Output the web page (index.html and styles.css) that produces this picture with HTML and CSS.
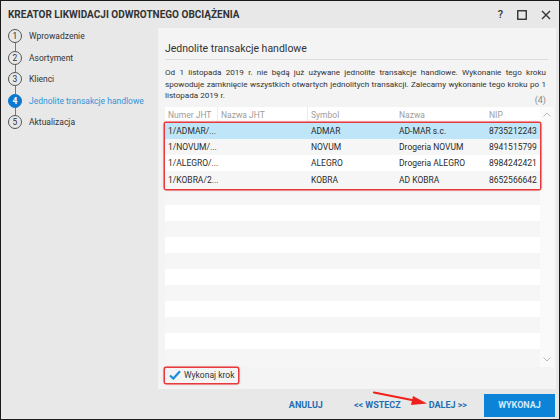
FILE: index.html
```html
<!DOCTYPE html>
<html lang="pl">

<head>
    <meta charset="UTF-8">
    <title>Kreator likwidacji odwrotnego obciążenia</title>
    <link rel="stylesheet" href="styles.css">
</head>

<body>
    <div class="window">
        <div class="titlebar">
            <div class="title">KREATOR LIKWIDACJI ODWROTNEGO OBCIĄŻENIA</div>
            <div class="win-icons">
                <span class="help">?</span>
                <svg width="10" height="10" viewBox="0 0 10 10"><rect x="0.75" y="0.75" width="8.5" height="8.5" fill="none" stroke="#333" stroke-width="1.4"/></svg>
                <svg width="10" height="10" viewBox="0 0 10 10"><path d="M1 1 L9 9 M9 1 L1 9" stroke="#333" stroke-width="1.4"/></svg>
            </div>
        </div>

        <div class="content">
            <div class="sidebar">
                <div class="step"><span class="num">1</span>Wprowadzenie</div>
                <div class="link"></div>
                <div class="step"><span class="num">2</span>Asortyment</div>
                <div class="link"></div>
                <div class="step"><span class="num">3</span>Klienci</div>
                <div class="link"></div>
                <div class="step active"><span class="num">4</span>Jednolite transakcje handlowe</div>
                <div class="link"></div>
                <div class="step"><span class="num">5</span>Aktualizacja</div>
            </div>

            <div class="panel">
                <h2 class="heading">Jednolite transakcje handlowe</h2>
                <div class="desc">
                    <div class="line">Od 1 listopada 2019 r. nie będą już używane jednolite transakcje handlowe. Wykonanie tego kroku</div>
                    <div class="line">spowoduje zamknięcie wszystkich otwartych jednolitych transakcji. Zalecamy wykonanie tego kroku po 1</div>
                    <div class="last">
                        <span>listopada 2019 r.</span>
                        <span class="count">(4)</span>
                    </div>
                </div>

                <div class="grid-wrap">
                    <div class="grid">
                        <div class="row head">
                            <div class="cell">Numer JHT</div>
                            <div class="cell">Nazwa JHT</div>
                            <div class="cell">Symbol</div>
                            <div class="cell">Nazwa</div>
                            <div class="cell">NIP</div>
                        </div>
                        <div class="marked">
                            <div class="row selected">
                                <div class="cell">1/ADMAR/...</div>
                                <div class="cell"></div>
                                <div class="cell">ADMAR</div>
                                <div class="cell">AD-MAR s.c.</div>
                                <div class="cell">8735212243</div>
                            </div>
                            <div class="row">
                                <div class="cell">1/NOVUM/...</div>
                                <div class="cell"></div>
                                <div class="cell">NOVUM</div>
                                <div class="cell">Drogeria NOVUM</div>
                                <div class="cell">8941515799</div>
                            </div>
                            <div class="row">
                                <div class="cell">1/ALEGRO/...</div>
                                <div class="cell"></div>
                                <div class="cell">ALEGRO</div>
                                <div class="cell">Drogeria ALEGRO</div>
                                <div class="cell">8984242421</div>
                            </div>
                            <div class="row">
                                <div class="cell">1/KOBRA/2...</div>
                                <div class="cell"></div>
                                <div class="cell">KOBRA</div>
                                <div class="cell">AD KOBRA</div>
                                <div class="cell">8652566642</div>
                            </div>
                        </div>
                        <div class="row"></div>
                        <div class="row"></div>
                        <div class="row"></div>
                        <div class="row"></div>
                        <div class="row"></div>
                        <div class="row"></div>
                        <div class="row"></div>
                        <div class="row"></div>
                        <div class="row"></div>
                        <div class="row"></div>
                        <div class="row"></div>
                    </div>
                    <div class="scrollbar">
                        <svg width="8" height="5" viewBox="0 0 8 5"><path d="M0.5 4.5 L4 1 L7.5 4.5" fill="none" stroke="#bbb" stroke-width="1"/></svg>
                        <svg width="8" height="5" viewBox="0 0 8 5"><path d="M0.5 0.5 L4 4 L7.5 0.5" fill="none" stroke="#bbb" stroke-width="1"/></svg>
                    </div>
                </div>

                <div class="checkrow">
                    <label class="check marked">
                        <svg width="12" height="10" viewBox="0 0 12 10"><path d="M1 5.5 L4.3 8.6 L11 1.2" fill="none" stroke="#1a8fdc" stroke-width="2.2"/></svg>
                        Wykonaj krok
                    </label>
                </div>
            </div>
        </div>

        <div class="footer">
            <button class="link-btn cancel">ANULUJ</button>
            <button class="link-btn back">&lt;&lt; WSTECZ</button>
            <button class="link-btn next">DALEJ &gt;&gt;</button>
            <button class="primary">WYKONAJ</button>
            <svg class="arrow" width="60" height="16" viewBox="0 0 60 16">
                <path d="M1 1.5 L44 10" stroke="#f0201c" stroke-width="2.2" stroke-linecap="round"/>
                <path d="M40 5 L54 12.5 L38 14 Z" fill="#f0201c"/>
            </svg>
        </div>
    </div>
</body>

</html>
```

FILE: styles.css
```css
body,
h2 {
    margin: 0;
    padding: 0;
}

body {
    font-family: 'Roboto', 'Open Sans', sans-serif;
    font-size: 8.5px;
    color: #2b2b2b;
    background: #e8e8e8;
}

.window {
    width: 560px;
    height: 420px;
    box-sizing: border-box;
    border: 1px solid #1a1a1a;
    background: #e8e8e8;
    display: flex;
    flex-direction: column;
}

/* title bar */
.titlebar {
    height: 27px;
    display: flex;
    align-items: center;
    justify-content: space-between;
    padding: 0 8px 0 7px;
}

.title {
    font-weight: 700;
    font-size: 10px;
    color: #333;
}

.win-icons {
    display: flex;
    align-items: center;
    gap: 14px;
}

.help {
    font-size: 11px;
    color: #333;
    font-weight: 500;
}

/* main area */
.content {
    flex: 1;
    display: flex;
    min-height: 0;
}

.sidebar {
    width: 150px;
    flex-shrink: 0;
    padding: 1px 0 0 7px;
    display: flex;
    flex-direction: column;
}

.step {
    display: flex;
    align-items: center;
    gap: 7px;
    height: 14px;
    color: #333;
}

.num {
    width: 12px;
    height: 12px;
    border: 1px solid #555;
    border-radius: 50%;
    display: flex;
    align-items: center;
    justify-content: center;
    font-size: 8.5px;
    color: #333;
    background: #e8e8e8;
}

.link {
    width: 1px;
    height: 7.5px;
    margin-left: 6.5px;
    background: #777;
}

.step.active {
    color: #3592d9;
}

.step.active .num {
    background: #0b79d0;
    border-color: #0b79d0;
    color: #fff;
    font-weight: 700;
}

.panel {
    flex: 1;
    min-width: 0;
    margin-right: 3px;
    background: #f4f4f4;
    padding: 0 2px 6px 7px;
    display: flex;
    flex-direction: column;
}

.heading {
    font-weight: 400;
    font-size: 10.5px;
    color: #333;
    padding: 14px 0 4px;
    margin-right: 6px;
    border-bottom: 1px solid #dcdcdc;
}

.desc {
    margin: 7px 8px 0 0;
    font-size: 8.1px;
    line-height: 11.5px;
    color: #333;
}

.desc .line {
    white-space: nowrap;
    text-align: justify;
    text-align-last: justify;
}

.desc .last {
    display: flex;
    justify-content: space-between;
    align-items: flex-end;
}

.count {
    color: #888;
    font-size: 9px;
    position: relative;
    top: 5px;
}

/* table */
.grid-wrap {
    margin-top: 5px;
    display: flex;
    background: #fff;
}

.grid {
    width: 375px;
}

.row {
    display: grid;
    grid-template-columns: 53px 90px 88px 90px 54px;
    height: 16px;
    align-items: center;
}

.grid .row:nth-child(odd),
.marked .row:nth-child(even) {
    background: #f6f6f6;
}

.grid .row.head {
    background: #fff;
    color: #9c9c9c;
}

.head .cell {
    border-right: 1px solid #ececec;
    height: 16px;
    line-height: 16px;
}

.head .cell:nth-child(n+3) {
    border-right: none;
}

.cell {
    padding-left: 3px;
    white-space: nowrap;
    overflow: hidden;
}

.marked .row.selected {
    background: #bfe6f8;
}

.marked {
    position: relative;
    z-index: 1;
    box-shadow: 0 0 0 1.5px #e8393d, 0 0 3px 1px rgba(200, 0, 0, 0.25);
    border-radius: 1px;
}

.grid-wrap .marked .row:nth-child(odd):not(.selected) {
    background: #fff;
}

.scrollbar {
    flex: 1;
    display: flex;
    flex-direction: column;
    justify-content: space-between;
    align-items: center;
    padding: 5px 0 5px;
    background: #fafafa;
}

.grid .row:last-child {
    height: 18px;
}

/* checkbox */
.checkrow {
    display: flex;
    margin-top: 1px;
}

.check {
    display: flex;
    align-items: center;
    gap: 3px;
    height: 15px;
    padding: 0 4px 0 4px;
    color: #333;
}

/* footer */
.footer {
    height: 30px;
    display: flex;
    align-items: center;
    justify-content: flex-end;
    padding-right: 4px;
    position: relative;
}

.link-btn {
    border: none;
    background: none;
    font-family: inherit;
    font-size: 9px;
    font-weight: 700;
    color: #1f6db3;
    padding: 0;
    margin-top: 1px;
}

.cancel {
    margin-right: 31px;
}

.back {
    margin-right: 28px;
}

.next {
    margin-right: 17px;
}

.primary {
    width: 71px;
    height: 23px;
    border: none;
    background: #0b84d8;
    color: #d5e9f7;
    font-family: inherit;
    font-size: 9px;
    font-weight: 700;
    margin-top: 2px;
}

.arrow {
    position: absolute;
    left: 372px;
    top: 2px;
}
```
